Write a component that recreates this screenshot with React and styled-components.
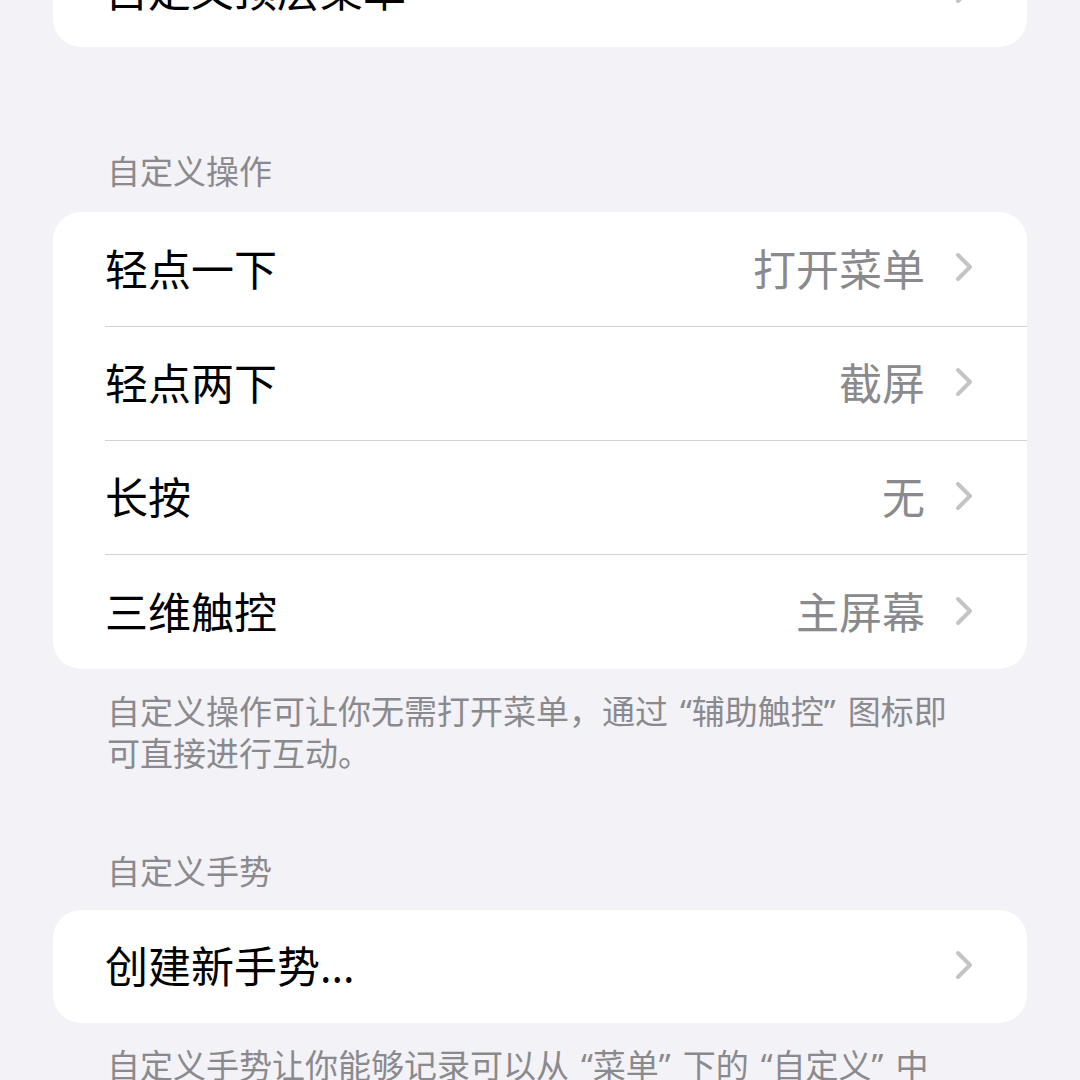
import React from 'react'
import styled, { createGlobalStyle } from 'styled-components'

const GlobalStyle = createGlobalStyle`
  html, body {
    margin: 0;
    padding: 0;
    background: #f2f2f7;
    font-family: "Noto Sans CJK SC", "Noto Sans", sans-serif;
    -webkit-font-smoothing: antialiased;
  }
`

const Page = styled.div`
  width: 1080px;
  height: 1080px;
  overflow: hidden;
  background: #f2f2f7;
  padding: 0 53px;
  box-sizing: border-box;
`

const Card = styled.div`
  background: #fff;
  border-radius: 28px;
  overflow: hidden;
  margin-top: ${p => p.$top || 0}px;
`

const Row = styled.div`
  padding-left: 52px;
  height: ${p => p.$h || 114.25}px;
  box-sizing: border-box;
`

const RowInner = styled.div`
  height: 100%;
  display: flex;
  align-items: center;
  padding-right: 54px;
  padding-bottom: 3px;
  box-sizing: border-box;
  border-bottom: ${p => (p.$last ? 'none' : '1.5px solid #d1d1d6')};
`

const Label = styled.div`
  flex: 1;
  font-size: 43px;
  color: #000;
  line-height: 1;
`

const Value = styled.div`
  font-size: 43px;
  color: #8a8a8e;
  line-height: 1;
  margin-right: 30px;
`

// Latin punctuation (quotes, dots) set in a proportional face like iOS does
const Latin = styled.span`
  font-family: "Noto Sans", sans-serif;
  margin-left: ${p => p.$before || 0}px;
  margin-right: ${p => p.$after || 0}px;
`

const Open = () => <Latin $before={12}>“</Latin>
const Close = () => <Latin $after={12}>”</Latin>

const Chevron = () => (
  <svg width="18" height="30" viewBox="0 0 18 30">
    <path d="M3 3 L15 15 L3 27" fill="none" stroke="#c4c4c7" strokeWidth="4" strokeLinecap="round" strokeLinejoin="round" />
  </svg>
)

const SectionHeader = styled.div`
  font-size: 33px;
  line-height: 40px;
  color: #8a8a8e;
  padding-left: 54px;
  margin-top: ${p => p.$top}px;
  margin-bottom: ${p => p.$bottom}px;
`

const Footer = styled.div`
  font-size: 33px;
  line-height: 40px;
  color: #8a8a8e;
  padding: 0 54px;
  margin-top: 21px;
`

const ListRow = ({ label, value, last, h }) => (
  <Row $h={h}>
    <RowInner $last={last}>
      <Label>{label}</Label>
      {value && <Value>{value}</Value>}
      <Chevron />
    </RowInner>
  </Row>
)

const actions = [
  { label: '轻点一下', value: '打开菜单' },
  { label: '轻点两下', value: '截屏' },
  { label: '长按', value: '无' },
  { label: '三维触控', value: '主屏幕' },
]

export default function App() {
  return (
    <>
      <GlobalStyle />
      <Page>
        <Card $top={-67}>
          <ListRow label="自定义顶层菜单" last />
        </Card>

        <SectionHeader $top={103} $bottom={22}>自定义操作</SectionHeader>
        <Card>
          {actions.map((a, i) => (
            <ListRow key={a.label} label={a.label} value={a.value} last={i === actions.length - 1} />
          ))}
        </Card>
        <Footer>
          自定义操作可让你无需打开菜单，通过<Open />辅助触控<Close />图标即<br />可直接进行互动。
        </Footer>

        <SectionHeader $top={78} $bottom={20}>自定义手势</SectionHeader>
        <Card>
          <ListRow label={<>创建新手势<Latin>...</Latin></>} last h={113} />
        </Card>
        <Footer>
          自定义手势让你能够记录可以从<Open />菜单<Close />下的<Open />自定义<Close />中<br />激活的手势。
        </Footer>
      </Page>
    </>
  )
}
